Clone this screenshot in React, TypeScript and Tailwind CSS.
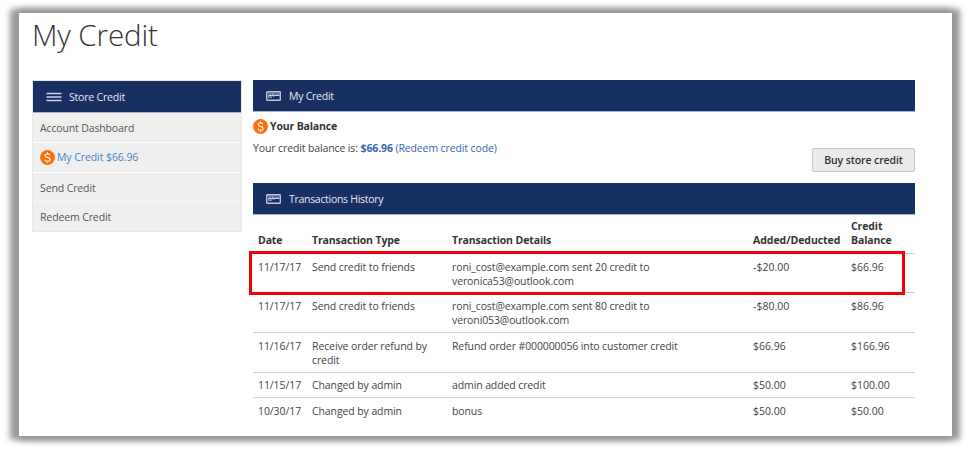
import React from "react";

const rows = [
  { date: "11/17/17", type: ["Send credit to friends"], details: ["roni_cost@example.com sent 20 credit to", "veronica53@outlook.com"], change: "-$20.00", balance: "$66.96", height: "h-[39px] pt-[6px]" },
  { date: "11/17/17", type: ["Send credit to friends"], details: ["roni_cost@example.com sent 80 credit to", "veroni053@outlook.com"], change: "-$80.00", balance: "$86.96", height: "h-[40px] pt-[6px]" },
  { date: "11/16/17", type: ["Receive order refund by", "credit"], details: ["Refund order #000000056 into customer credit"], change: "$66.96", balance: "$166.96", height: "h-[40px] pt-[6px]" },
  { date: "11/15/17", type: ["Changed by admin"], details: ["admin added credit"], change: "$50.00", balance: "$100.00", height: "h-[25px] pt-[5px]" },
  { date: "10/30/17", type: ["Changed by admin"], details: ["bonus"], change: "$50.00", balance: "$50.00", height: "h-[26px] pt-[6px]" },
];

function CoinIcon() {
  return (
    <svg width="15" height="15" viewBox="0 0 15 15" className="shrink-0" fill="none">
      <circle cx="7.5" cy="7.5" r="7.4" fill="#fc6e0c" />
      <path d="M10 5.2C9.6 4.3 8.7 3.9 7.5 3.9C6.1 3.9 5.1 4.5 5.1 5.6C5.1 6.7 6.1 7.1 7.5 7.4C9 7.7 10.1 8.2 10.1 9.4C10.1 10.5 9 11.2 7.6 11.2C6.2 11.2 5.2 10.7 4.9 9.7M7.5 2.3V4M7.5 11V12.7" stroke="#fff" strokeWidth="1.1" />
    </svg>
  );
}

function CardIcon() {
  return (
    <svg width="15" height="10" viewBox="0 0 15 10" className="shrink-0" fill="none">
      <rect x=".7" y=".7" width="13.6" height="8.6" rx=".6" stroke="#bcc4d7" strokeWidth="1.4" />
      <path d="M1 2H14" stroke="#9aa6c2" />
      <path d="M2 5.4L4 3.8L4.8 5L6.8 3.6L7.4 4.8L9 4.3H13.5" stroke="#c4cbdc" strokeWidth="1.4" />
      <path d="M2 6.6H6" stroke="#7f8cae" />
    </svg>
  );
}

function SectionBar({ title, tracking }: { title: string; tracking: string }) {
  return (
    <div className="flex h-8 items-center border-b border-[#a5b1ca] bg-[#182f62] pl-[13px] text-[#e6e9f1]">
      <CardIcon />
      <h2 className={`pl-[8px] font-normal ${tracking}`}>{title}</h2>
    </div>
  );
}

export default function App() {
  return (
    <div className="h-[449px] w-[971px] overflow-hidden bg-white pt-[13px] pl-[19px] font-['Open_Sans',sans-serif] text-[10.5px] leading-[14px] text-[#444]">
      <main className="h-[423px] w-[933px] bg-white pl-[13px] shadow-[-5px_0_6px_4px_#999,4px_0_6px_4px_#999]">
        <h1 className="h-[67px] pt-[2px] text-[29.5px] leading-[40px] font-light tracking-[-0.1px] text-[#333]">My Credit</h1>
        <div className="flex items-start gap-[11px]">
          <nav className="h-[152px] w-[210px] border border-[#e8e8e8] bg-[#efefef] tracking-[-0.12px] text-[#555]">
            <div className="flex h-8 items-center border-b border-[#a5b1ca] bg-[#182f62] pl-[13px] tracking-[-0.2px] text-[#e6e9f1]">
              <svg width="16" height="10" viewBox="0 0 16 10">
                <path d="M.5 1.5H15.5M.5 5H15.5M.5 8.5H15.5" stroke="#ccd2e0" strokeWidth="1.6" />
              </svg>
              <h2 className="pl-[7px] font-normal">Store Credit</h2>
            </div>
            <div className="flex h-[30px] items-center border-b border-white pl-[7px] tracking-[-0.14px]">Account Dashboard</div>
            <div className="flex h-[30px] items-center gap-[2px] border-b border-white pl-[7px] tracking-[-0.08px] text-[#4684bd]">
              <CoinIcon />
              <span className="pb-px">My Credit $66.96</span>
            </div>
            <div className="flex h-[29px] items-center border-b border-[#f8f8f8] pt-px pl-[7px]">Send Credit</div>
            <div className="flex h-[29px] items-center pl-[7px]">Redeem Credit</div>
          </nav>
          <section className="w-[662px]">
            <SectionBar title="My Credit" tracking="tracking-[-0.25px]" />
            <div className="flex h-[71px] justify-between">
              <div>
                <div className="flex h-[29px] items-center gap-[2px] font-bold tracking-[-0.15px] text-[#333]">
                  <CoinIcon />
                  <span className="pb-[2px]">Your Balance</span>
                </div>
                <p className="tracking-[-0.12px]">
                  Your credit balance is: <span className="text-[#3567b0]"><b>$66.96</b> (Redeem credit code)</span>
                </p>
              </div>
              <button className="mt-9 h-6 w-[103px] rounded-[2px] border border-[#c4c4c4] bg-[#eaeaea] font-semibold tracking-[-0.1px] text-[#333]">
                Buy store credit
              </button>
            </div>
            <SectionBar title="Transactions History" tracking="tracking-[-0.3px]" />
            <div className="relative">
              <div className="grid h-[39px] grid-cols-[54px_140px_301px_98px_64px] items-end border-b border-[#d4d4d4] pb-[6px] pl-[5px] font-bold tracking-[-0.12px] text-[#333]">
                <span>Date</span>
                <span>Transaction Type</span>
                <span>Transaction Details</span>
                <span className="tracking-[-0.05px]">Added/Deducted</span>
                <span>Credit<br />Balance</span>
              </div>
              {rows.map((row, i) => (
                <div
                  key={i}
                  className={`grid grid-cols-[54px_140px_301px_98px_64px] pl-[5px] ${row.height} ${i < rows.length - 1 ? "border-b border-[#d4d4d4]" : ""}`}
                >
                  <span className="tracking-[-0.08px]">{row.date}</span>
                  <span className="tracking-[-0.1px]">{row.type.map((line) => <span key={line} className="block">{line}</span>)}</span>
                  <span className="tracking-[-0.11px]">{row.details.map((line) => <span key={line} className="block">{line}</span>)}</span>
                  <span>{row.change}</span>
                  <span>{row.balance}</span>
                </div>
              ))}
              <div className="absolute top-9 -left-1 h-[44px] w-[656px] border-[3px] border-[#f3000d]" />
            </div>
          </section>
        </div>
      </main>
    </div>
  );
}
